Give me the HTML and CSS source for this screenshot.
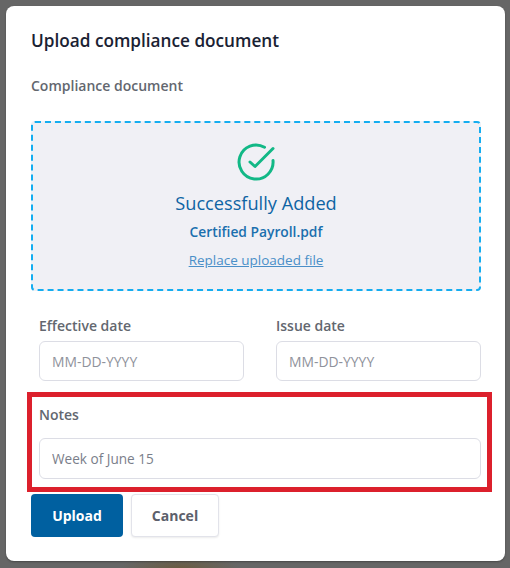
FILE: index.html
```html
<!DOCTYPE html>
<html lang="en">
<head>
  <meta charset="UTF-8">
  <meta name="viewport" content="width=device-width, initial-scale=1.0">
  <title>Upload compliance document</title>
  <link rel="stylesheet" href="styles.css">
</head>
<body>
  <div class="modal">
    <h1 class="modal-title">Upload compliance document</h1>
    <div class="field-label doc-label">Compliance document</div>
    <div class="dropzone">
      <svg class="check-icon" width="40" height="40" viewBox="0 0 40 40" fill="none" stroke="#12b886" stroke-width="3" stroke-linecap="round" stroke-linejoin="round">
        <path d="M37 18.5A17 17 0 1 1 28.5 5.3"/>
        <path d="M14 20l5 4.5L37 6.5"/>
      </svg>
      <div class="success-title">Successfully Added</div>
      <div class="file-name">Certified Payroll.pdf</div>
      <a class="replace-link" href="#">Replace uploaded file</a>
    </div>
    <div class="date-row">
      <div class="date-field">
        <label class="field-label">Effective date</label>
        <input class="text-input" type="text" placeholder="MM-DD-YYYY">
      </div>
      <div class="date-field">
        <label class="field-label">Issue date</label>
        <input class="text-input" type="text" placeholder="MM-DD-YYYY">
      </div>
    </div>
    <div class="notes-highlight">
      <label class="field-label notes-label">Notes</label>
      <input class="text-input" type="text" value="Week of June 15">
    </div>
    <div class="buttons">
      <button class="btn btn-primary">Upload</button>
      <button class="btn btn-secondary">Cancel</button>
    </div>
  </div>
</body>
</html>
```

FILE: styles.css
```css
* {
  box-sizing: border-box;
}
html, body {
  height: 100%;
}
body {
  margin: 0;
  padding: 6px 5px 7px 6px;
  font-family: "Open Sans", "Noto Sans", sans-serif;
  background: radial-gradient(ellipse 60px 12px at 180px 568px, #6b5c42, transparent), #666666;
  overflow: hidden;
}
.modal {
  background: white;
  height: 555px;
  border-radius: 8px;
  padding: 23px 24px 0 25px;
  box-shadow: 0 1px 2px rgba(0,0,0,0.3);
}
.modal-title {
  margin: 0;
  font-size: 17.2px;
  line-height: 24px;
  font-weight: 600;
  color: #1a2233;
}
.field-label {
  display: block;
  font-size: 14px;
  line-height: 20px;
  font-weight: 600;
  color: #63676f;
}
.doc-label {
  margin-top: 23px;
}
.dropzone {
  margin-top: 25px;
  height: 170px;
  display: flex;
  flex-direction: column;
  align-items: center;
  background: #f0f0f5;
  border: 2px dashed #14adf0;
  border-radius: 4px;
  padding-top: 19px;
  text-align: center;
}
.check-icon {
  display: block;
}
.success-title {
  margin-top: 8px;
  font-size: 18.2px;
  line-height: 26px;
  color: #0e64a4;
}
.file-name {
  margin-top: 6px;
  font-size: 13.8px;
  line-height: 20px;
  font-weight: 600;
  color: #1a6fae;
}
.replace-link {
  margin-top: 8px;
  font-size: 13.5px;
  line-height: 20px;
  color: #4a8fc8;
  text-decoration: underline;
}
.date-row {
  display: flex;
  gap: 32px;
  margin-top: 25px;
  padding-left: 8px;
}
.date-field {
  flex: 1;
}
.date-field .field-label {
  margin-bottom: 5px;
}
.text-input {
  display: block;
  width: 100%;
  height: 40px;
  padding: 0 12px;
  border: 1px solid #dcdde5;
  border-radius: 6px;
  background: white;
  font-family: inherit;
  font-size: 13.6px;
  color: #7a7e8a;
}
.text-input::placeholder {
  font-size: 13.9px;
  color: #8f929b;
  opacity: 1;
}
.notes-highlight {
  margin: 11px -11px 0 -4px;
  height: 100px;
  border: 5px solid #dc202c;
  padding: 8px 6px 0 7px;
}
.notes-label {
  margin-bottom: 13px;
}
.notes-highlight .text-input {
  height: 41px;
}
.buttons {
  display: flex;
  gap: 8px;
  margin-top: 2px;
}
.btn {
  height: 43px;
  border-radius: 4px;
  font-family: inherit;
  font-size: 14px;
  font-weight: 700;
}
.btn-primary {
  width: 92px;
  background: #0060a0;
  color: white;
  border: none;
}
.btn-secondary {
  width: 88px;
  background: white;
  color: #5c606b;
  border: 1px solid #e2e3ea;
  box-shadow: 0 1px 2px rgba(0,0,0,0.08);
}
```
